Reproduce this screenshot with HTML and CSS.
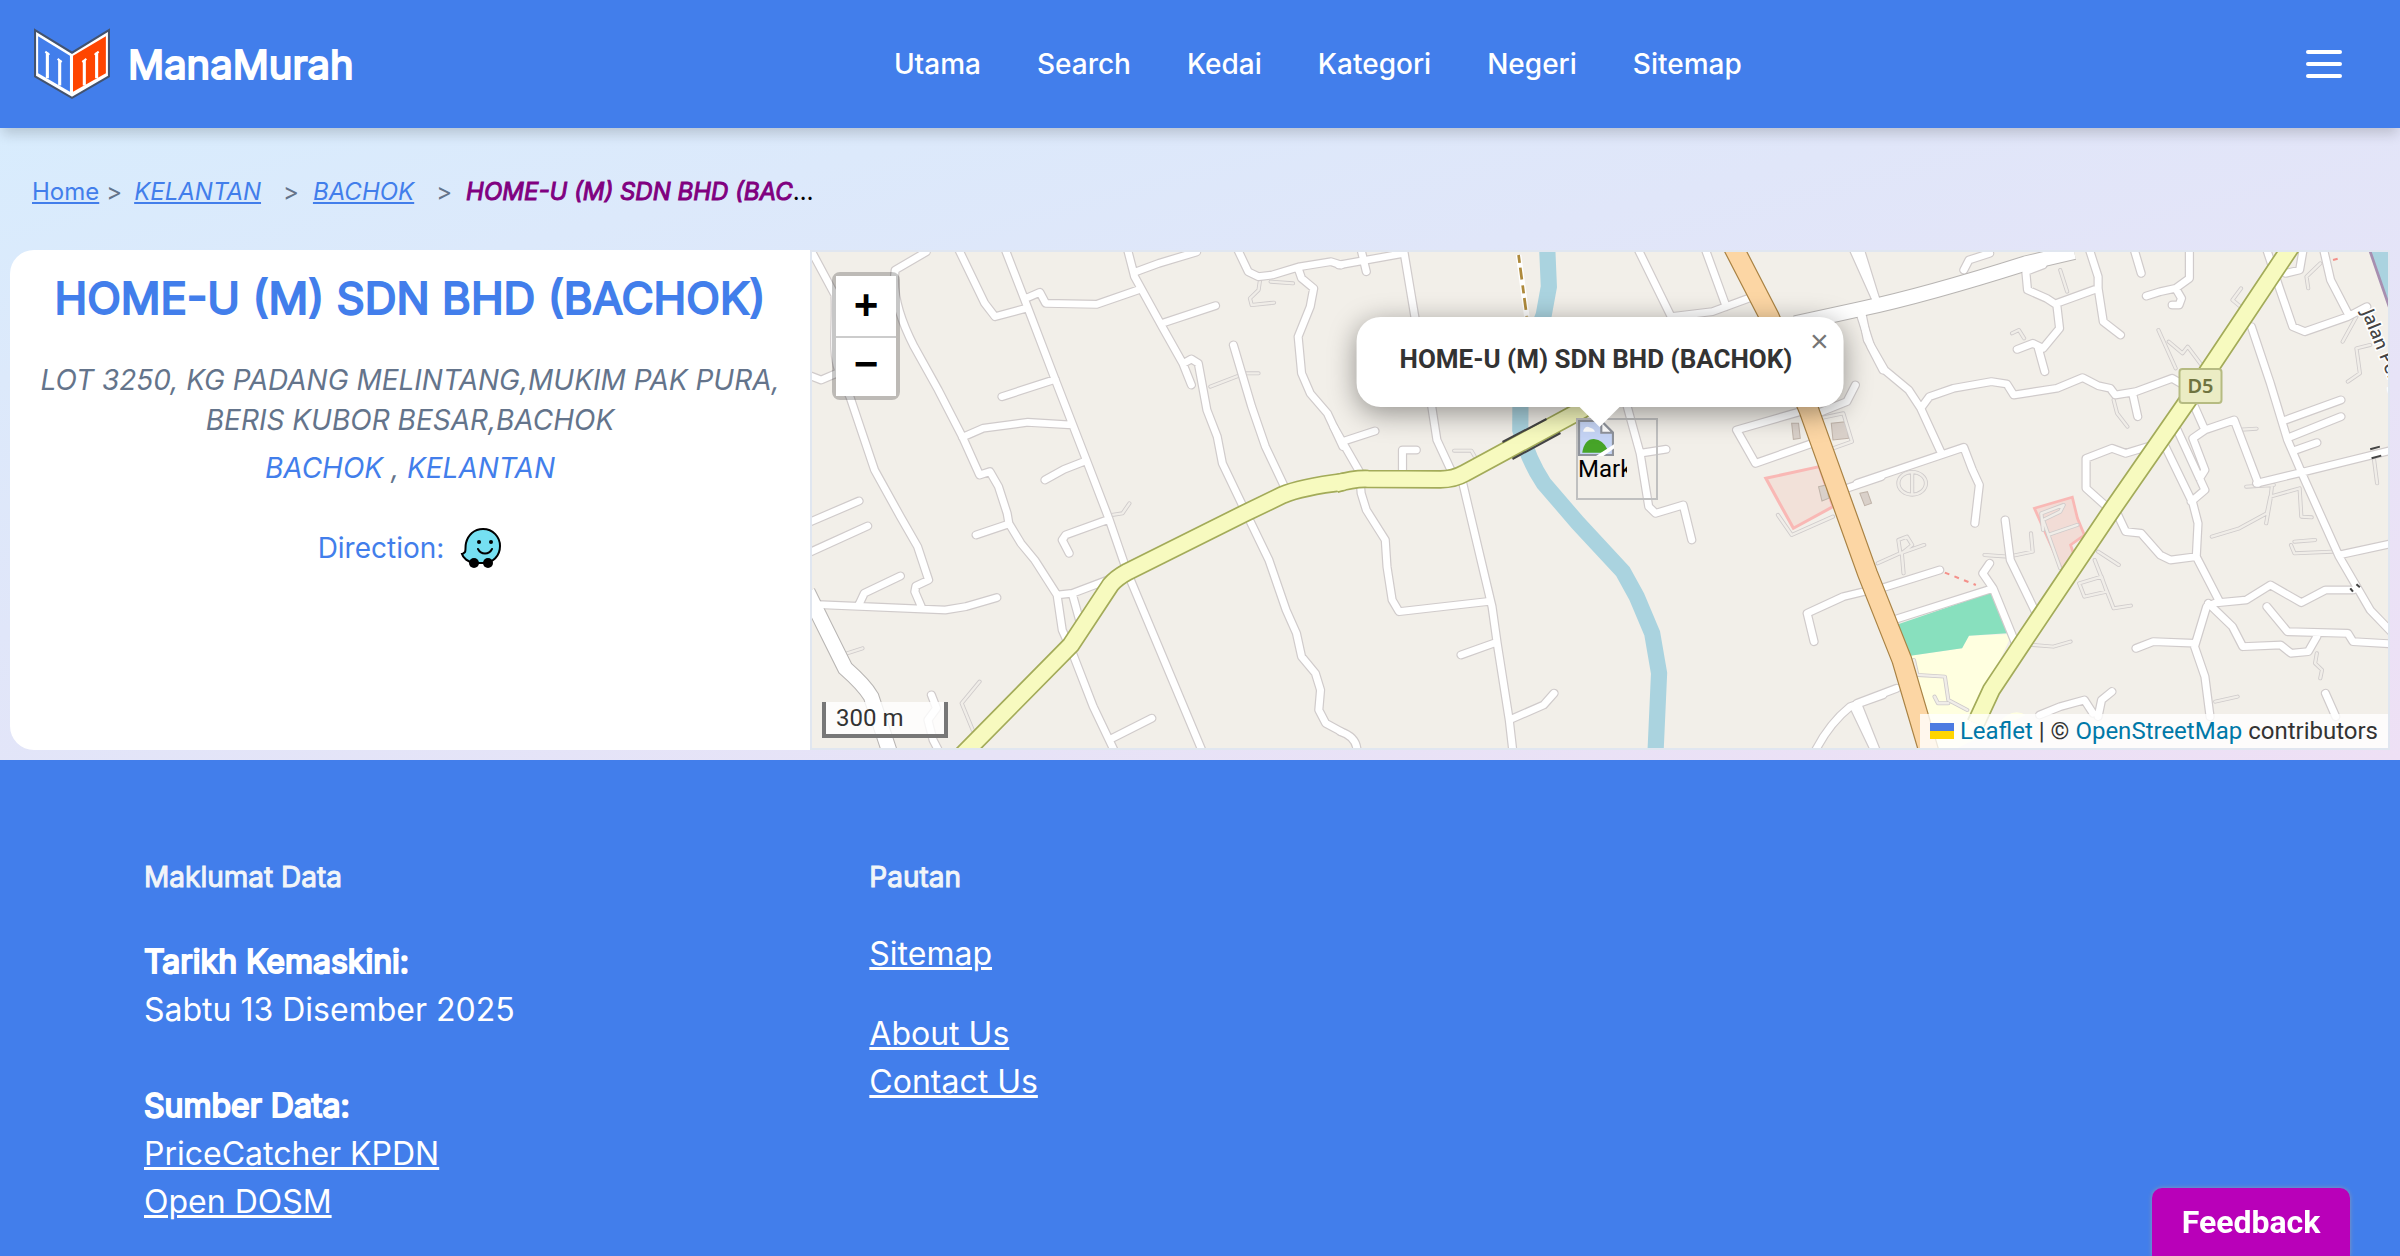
FILE: index.html
```html
<!DOCTYPE html>
<html lang="ms">
<head>
<meta charset="utf-8">
<meta name="viewport" content="width=device-width, initial-scale=1">
<title>HOME-U (M) SDN BHD (BACHOK) - ManaMurah</title>
<link rel="stylesheet" href="styles.css">
</head>
<body>
<header class="site-header">
  <a class="brand" href="#">
    <svg class="brand-logo" viewBox="0 0 76 70" aria-hidden="true">
      <path d="M2 2 38 24 74 2V47L38 68 2 47Z" fill="#fff" stroke="#43536f" stroke-width="2"/>
      <path d="M5 8 36 27V62L5 44Z" fill="#427eeb"/>
      <path d="M39 27 71 8V44L39 62Z" fill="#ff4500"/>
      <path d="M14 49V24M26 56V31M50 56V31M62 49V24" fill="none" stroke="#fff" stroke-width="3"/>
      <path d="M12 23 16 26M24 30 28 33M52 30 48 33M64 23 60 26" fill="none" stroke="#fff" stroke-width="2"/>
    </svg>
    <span class="brand-name">ManaMurah</span>
  </a>
  <nav class="main-nav" aria-label="Utama">
    <a href="#">Utama</a><a href="#">Search</a><a href="#">Kedai</a><a href="#">Kategori</a><a href="#">Negeri</a><a href="#">Sitemap</a>
  </nav>
  <button class="menu-button" type="button" aria-label="Menu"><span></span><span></span><span></span></button>
</header>

<main>
  <nav class="breadcrumb" aria-label="Breadcrumb">
    <a href="#">Home</a><span class="sep">&gt;</span>
    <a class="slanted" href="#">KELANTAN</a><span class="sep wide">&gt;</span>
    <a class="slanted" href="#">BACHOK</a><span class="sep wide">&gt;</span>
    <span class="current"><em>HOME-U (M) SDN BHD (BACHOK)</em></span>
  </nav>

  <section class="shop">
    <div class="shop-info">
      <h1>HOME-U (M) SDN BHD (BACHOK)</h1>
      <address>LOT 3250, KG PADANG MELINTANG,MUKIM PAK PURA, BERIS KUBOR BESAR,BACHOK</address>
      <p class="region"><a href="#">BACHOK</a> , <a href="#">KELANTAN</a></p>
      <a class="direction" href="#">Direction:
        <svg class="waze" viewBox="0 0 42 42" aria-hidden="true">
          <path d="M5 25C6 23 5 20 6 16 8 8 14 2 23 2 33 2 40 10 40 19 40 29 33 36 23 36H14C8 35 3 31 2 27 3 27 4 26 5 25Z" fill="#75e0f2" stroke="#000" stroke-width="2"/>
          <circle cx="14" cy="36" r="5"/><circle cx="28" cy="36" r="5"/>
          <circle cx="19" cy="15" r="2"/><circle cx="31" cy="15" r="2"/>
          <path d="M18 22C21 28 29 28 32 22" fill="none" stroke="#000" stroke-width="2" stroke-linecap="round"/>
        </svg>
      </a>
    </div>

    <div class="map">
      <svg class="map-tiles" viewBox="811 252 1577 496" preserveAspectRatio="xMidYMid slice" aria-hidden="true">
        <defs>
          <g id="streets" fill="none" stroke-linecap="round" stroke-linejoin="round">
            <path transform="translate(800 240) scale(.3444 .3333)" d="M35 40 100 165C105 250 90 330 110 390L145 475 215 690 290 830 340 920 372 1020 335 1038 332 1055 350 1098M365 36 275 90C265 160 290 240 330 320L400 450 470 590 520 705 550 695 575 740 600 820 605 850 640 910 680 960 745 1065 760 1170 790 1240 850 1400 910 1530M460 30 535 190 565 230 655 205M595 30 655 190 740 420 830 660 895 835 950 1000 1165 1530M655 175 695 157 712 190 860 193 980 150M950 30 970 110 1050 260 1110 370 1135 435M975 95 1040 70 1150 36M1050 250 1205 197M1112 370 1135 357 1155 370 1180 510 1210 590 1225 670 1285 800 1360 960 1410 1110 1440 1180 1455 1250 1495 1300 1510 1350 1505 1410 1525 1450 1570 1475M1257 315 1310 500 1350 620 1405 740M1270 30 1300 95 1330 110 1370 105 1450 80 1540 65 1570 75M1445 85 1455 115 1490 145 1480 200 1445 290 1455 400 1480 460 1530 520 1575 620M740 418 585 470M470 592 530 565 660 547 790 555M830 662 765 688 710 720M895 838 770 885 760 900 780 940M605 852 510 885M745 1065 790 1060 905 1015M790 1065 810 1140M25 847 170 783M25 938 195 858M30 1093 420 1110 480 1100 570 1073M170 1093 185 1060 290 1008M905 1495 1020 1435M30 408 60 420 105 400M380 1365 395 1405 370 1440 385 1500 400 1530"/>
            <path transform="translate(1340 240) scale(.3444 .3333)" d="M-5 75 185 40 215 225 265 500 280 600 325 700 355 730 440 1100 455 1210 490 1440 500 1530M60 30 75 95M-20 560 55 695 60 760 75 810 130 900 135 980 150 1080 170 1115 425 1085M5 605 100 573M180 700 180 630 220 630M350 1245 450 1208M490 1440 590 1395 620 1360M0 1475Q45 1490 48 1530M865 30 960 230 1080 215 1185 175M1060 30 1120 200M1490 30 1555 180M1510 225 1540 320 1575 390M830 490 870 640 895 800 915 820 995 795 1020 900M870 640 945 628M1335 515 1150 570 1205 670 1370 610M1385 520 1470 485 1495 435M1470 745 1570 710M1520 1055 1460 1070 1355 1120 1375 1205M1575 1365 1480 1400Q1420 1450 1380 1530M1490 1400 1550 1530"/>
            <path transform="translate(1860 240) scale(.3444 .3333)" d="M0 30 45 180M5 225 20 300 70 390 140 450 175 505 235 640M175 505 200 470 270 445 380 425 425 432 445 465 570 445 645 413 690 437 725 445 740 465 800 455 905 415 930 430M790 460 805 530M-10 730 300 622 325 690 345 735 332 850M520 60 530 75 480 95 485 150 540 175 570 195 578 265 530 325 500 310 455 328M515 320 535 395M570 190 690 145 690 110 665 30M690 145 705 245 755 285M795 30 815 100M955 30 955 115 915 145 870 155 830 168M915 145 932 175 925 195 905 195M300 90 315 60 375 40M1180 30 1215 140 1255 260 1290 275 1415 230 1470 200M1285 30 1275 90 1235 100M1345 30 1365 120 1415 220M1135 260 1190 430 1240 600 1290 720 1390 950 1480 1110 1545 1180M1235 540 1395 480M1250 590 1395 530M1265 630 1325 608M1150 730 1270 700 1545 630M970 500 1000 570 1085 540 1155 730M1000 570 965 595 1000 690 985 715M920 570 1000 750 960 785M885 620 965 790 980 850 975 950 1040 1080M745 820 770 875 815 880 870 945 900 960 975 950M850 615 770 640 730 625 655 655 655 745 720 805M1040 1088 1120 1080 1190 1035 1280 1088 1350 1050 1430 1050M1180 1100 1240 1175 1415 1180 1430 1205 1545 1212M1010 1090 1080 1160 1110 1220 1220 1215 1250 1240 1300 1235 1325 1190M1040 1085 1005 1100 970 1220 1000 1310 1015 1430M800 1225 850 1205 970 1210M1390 945 1545 910M420 840 435 960 510 1120M95 1140 385 1045 450 1210M385 1045 355 1000 375 970M60 1045 230 990M-10 1390 105 1345M-5 1400 45 1530M520 1425 580 1400 650 1380 675 1420M690 1430 700 1380 730 1355M1350 1360 1380 1430"/>
          </g>
          <g id="tracks" fill="none" stroke-linecap="round" stroke-linejoin="round">
            <path transform="translate(800 240) scale(.3444 .3333)" d="M1335 115 1330 150 1305 175 1310 195 1375 188M1365 125 1430 130M1190 440 1290 400 1330 400M905 825 935 820 955 790M135 1240 180 1225M500 1470 468 1390 520 1325"/>
            <path transform="translate(1340 240) scale(.3444 .3333)" d="M330 632 380 632 390 650M1270 825 1310 885 1430 830M1390 535 1460 520 1485 605 1430 625"/>
            <path transform="translate(1860 240) scale(.3444 .3333)" d="M440 280 460 270 475 295M580 90 600 155M1105 145 1080 180 1115 210M865 270 915 385M895 305 935 340 950 320 990 375M1335 70 1295 110 1300 145M1440 230 1400 305M1480 315 1440 325 1450 400 1415 425M735 480 745 520 775 560M1090 570 1150 566M1120 740 1200 735M1020 890 1100 865 1180 820 1190 770 1275 745 1280 830 1310 832M1195 735 1190 780 1178 850M1260 905 1320 900M1370 935 1260 940 1250 915M110 730A40 34 0 1 1 190 730A40 34 0 1 1 110 730M150 700V760M50 970 115 940 185 915M115 935 110 900 135 890 150 915 120 940 125 1000M360 945 430 950 500 935 495 880M690 935 750 975M680 960 735 1105 785 1097M635 1030 700 1010 715 1055 650 1070ZM500 1215 560 1220 610 1205M1325 1240 1320 1270 1340 1290 1335 1315M1490 650 1500 730M1030 1385 1095 1370M530 870 525 820 590 795 580 815 530 840 580 985M545 885 630 855M155 1260 165 1305 245 1310 255 1380 310 1410M215 1370 225 1390 255 1390"/>
          </g>
          <g id="secondary" fill="none">
            <path transform="translate(800 240) scale(.3444 .3333)" d="M470 1545 785 1215 900 1035Q915 1015 950 995L1290 820 1400 765Q1450 742 1580 725"/>
            <path transform="translate(1340 240) scale(.3444 .3333)" d="M-15 732Q40 715 80 717L290 718Q330 718 360 700L700 510 800 440"/>
            <path transform="translate(1860 240) scale(.3444 .3333)" d="M1250 20 985 430 730 810 470 1210 380 1350 335 1450"/>
          </g>
          <g id="wide-streets" fill="none">
            <path transform="translate(800 240) scale(.3444 .3333)" d="M20 1055 65 1150 130 1285Q185 1335 205 1370L260 1540"/>
            <path transform="translate(1340 240) scale(.3444 .3333)" d="M1320 250 1510 207Q1700 165 1990 70L2130 36"/>
          </g>
          <g id="primary" fill="none">
            <path transform="translate(1340 240) scale(.3444 .3333)" d="M1140 20 1245 230 1360 510 1530 1000 1630 1260 1710 1540"/>
          </g>
        </defs>
        <rect x="811" y="252" width="1577" height="496" fill="#f2efe9"/>
        <g transform="translate(1860 240) scale(.3444 .3333)">
          <path d="M1475 20 1545 230V20Z" fill="#aad3df" stroke="#a78fb0" stroke-width="8"/>
          <path d="M505 805 615 772 630 835 650 885 610 915 620 945 585 990Z" fill="#f2dcd6" stroke="#f9b8b5" stroke-width="8"/>
          <path d="M140 1248 295 1225 315 1187 440 1182 320 1450H400Q440 1400 480 1425L280 1525H200Z" fill="#ffffe0"/>
          <path d="M103 1155 385 1055 425 1180 315 1187 295 1225 140 1248Z" fill="#88e0be"/>
        </g>
        <g transform="translate(1340 240) scale(.3444 .3333)">
          <path d="M600 20 605 140 590 225 523 400 522 570Q545 660 590 730L690 850 820 995 860 1070 905 1180 925 1300 915 1530" fill="none" stroke="#aad3df" stroke-width="47"/>
          <path d="M1235 715 1390 680 1430 800 1315 865Z" fill="#f2e1d9" stroke="#f9b8b5" stroke-width="9"/>
          <path d="M517 45 541 230" fill="none" stroke="#fff" stroke-width="16"/>
          <path d="M517 45 541 230" fill="none" stroke="#ae8a3c" stroke-width="8" stroke-dasharray="24 14 36 18"/>
          <path d="M1310 550 1330 550 1335 595 1315 598ZM1425 550 1470 545 1475 595 1430 600ZM1388 740 1410 735 1418 775 1398 783ZM1508 760 1530 755 1542 790 1522 797Z" fill="#d9d0c9" stroke="#c0b4aa" stroke-width="3"/>
        </g>
        <use href="#tracks" stroke="#cfcbcb" stroke-width="12"/>
        <use href="#tracks" stroke="#f0ede8" stroke-width="7"/>
        <use href="#streets" stroke="#d0cbcb" stroke-width="27"/>
        <use href="#wide-streets" stroke="#b8b5b3" stroke-width="48"/>
        <use href="#streets" stroke="#fff" stroke-width="20"/>
        <use href="#wide-streets" stroke="#fff" stroke-width="42"/>
        <use href="#secondary" stroke="#a3ab59" stroke-width="56"/>
        <use href="#secondary" stroke="#f7fabf" stroke-width="46"/>
        <path d="M1502 442 1546 419M1512 459 1560 433" stroke="#444" stroke-width="2"/>
        <use href="#primary" stroke="#a98243" stroke-width="61"/>
        <use href="#primary" stroke="#fcd6a4" stroke-width="54"/>
        <g transform="translate(1860 240) scale(.3444 .3333)" fill="none">
          <path d="M245 998 335 1035M1372 60 1400 52" stroke="#f4908a" stroke-width="6" stroke-dasharray="14 16"/>
          <path d="M1480 628 1508 620M1484 655 1512 647M1422 1045 1430 1055M1440 1033 1450 1042" stroke="#444" stroke-width="6"/>
        </g>
        <rect x="2179" y="369" width="42" height="34" rx="3" fill="#ebecc4" stroke="#b6bb82" stroke-width="2"/>
        <text class="road-shield" x="2200" y="393" text-anchor="middle">D5</text>
        <text class="road-label" transform="translate(2361 312) rotate(68)">Jalan Pengkalan</text>
      </svg>

      <div class="zoom-control">
        <button type="button" aria-label="Zoom in">+</button>
        <button type="button" aria-label="Zoom out">−</button>
      </div>

      <div class="marker">
        <svg class="broken-image" viewBox="0 0 34 34" aria-hidden="true">
          <path d="M1 1H22L33 12V33H1Z" fill="#c6d5f6" stroke="#8f939b" stroke-width="2"/>
          <path d="M5 10Q7 5 11 7 15 8 16 11H5Z" fill="#fff"/>
          <path d="M4 31Q6 18 15 18 24 19 28 28L22 31Z" fill="#46a428"/>
          <path d="M17 34 34 23V27L24 34Z" fill="#fff"/>
          <path d="M22 1V12H33Z" fill="#fff" stroke="#8f939b" stroke-width="2"/>
        </svg>
        <span class="marker-alt">Marker</span>
      </div>

      <div class="popup">
        <strong>HOME-U (M) SDN BHD (BACHOK)</strong>
        <button class="popup-close" type="button" aria-label="Close popup">×</button>
      </div>

      <div class="map-scale">300 m</div>
      <div class="attribution">
        <a href="#"><svg class="flag" viewBox="0 0 24 16" aria-hidden="true"><path fill="#4c7be1" d="M0 0H24V8H0Z"/><path fill="#ffd500" d="M0 8H24V16H0Z"/></svg> Leaflet</a> | © <a href="#">OpenStreetMap</a> contributors
      </div>
    </div>
  </section>
</main>

<footer class="site-footer">
  <section>
    <h2>Maklumat Data</h2>
    <p class="first"><strong>Tarikh Kemaskini:</strong><br>Sabtu 13 Disember 2025</p>
    <p><strong>Sumber Data:</strong><br><a href="#">PriceCatcher KPDN</a><br><a href="#">Open DOSM</a></p>
  </section>
  <section>
    <h2>Pautan</h2>
    <ul>
      <li class="lead"><a href="#">Sitemap</a></li>
      <li><a href="#">About Us</a></li>
      <li><a href="#">Contact Us</a></li>
    </ul>
  </section>
</footer>
<button class="feedback" type="button">Feedback</button>
</body>
</html>
```
FILE: styles.css
```css
:root {
  --blue: #427eeb;
  --slate: #64748b;
}

* { box-sizing: border-box; }

body {
  margin: 0;
  min-height: 100vh;
  display: flex;
  flex-direction: column;
  font-family: Inter, "Liberation Sans", sans-serif;
  font-size: 28px;
  color: #000;
}

a { color: inherit; }
button { font: inherit; cursor: pointer; }

/* Header */
.site-header {
  position: relative;
  display: flex;
  align-items: center;
  justify-content: space-between;
  height: 128px;
  padding: 0 34px 0 33px;
  background: var(--blue);
  color: #fff;
  box-shadow: 0 8px 12px -2px rgba(0, 0, 0, .16);
}

.brand {
  display: flex;
  align-items: center;
  gap: 17px;
  text-decoration: none;
}

.brand-logo { width: 78px; height: 72px; }

.brand-name {
  font-size: 40px;
  -webkit-text-stroke: 2px currentColor;
}

.main-nav { display: flex; gap: 56px; }
.main-nav a { font-weight: 500; text-decoration: none; }

.menu-button {
  display: flex;
  flex-direction: column;
  gap: 8px;
  padding: 24px;
  border: 0;
  background: none;
}

.menu-button span {
  width: 36px;
  height: 4px;
  border-radius: 2px;
  background: #fff;
}

/* Page body */
main {
  padding: 0 10px 10px;
  background: linear-gradient(to bottom right, #d8ecfd, #e0e6f9 40%, #eee0f5);
}

.breadcrumb {
  display: flex;
  align-items: center;
  height: 122px;
  padding: 4px 22px 0;
  font-size: 24px;
  color: var(--blue);
}

.breadcrumb .slanted { font-style: italic; }
.sep { margin: 0 12px 0 7px; color: var(--slate); }
.sep.wide { margin: 0 14px 0 22px; }

.current {
  max-width: 358px;
  overflow: hidden;
  white-space: nowrap;
  text-overflow: ellipsis;
  color: #000;
}

.current em {
  color: #800080;
  -webkit-text-stroke: 1px currentColor;
}

.shop {
  display: grid;
  grid-template-columns: 800px 1fr;
  height: 500px;
  border-radius: 24px;
}

.shop-info {
  padding: 16px 24px;
  border-radius: 24px 0 0 24px;
  background: #fff;
  color: var(--slate);
  text-align: center;
}

h1 {
  margin: 0;
  font-size: 44px;
  line-height: 64px;
  font-weight: 400;
  color: var(--blue);
  -webkit-text-stroke: 2px currentColor;
}

address {
  margin-top: 30px;
  line-height: 40px;
}

.region {
  margin: 8px 0 0;
  line-height: 40px;
  font-style: italic;
}

.region a, .direction {
  color: var(--blue);
  text-decoration: none;
}

.direction {
  display: inline-flex;
  align-items: center;
  gap: 16px;
  margin-top: 39px;
}

.waze { width: 42px; height: 42px; }

/* Map */
.map {
  position: relative;
  overflow: hidden;
  border: 2px solid #e0e6f0;
  font-family: Roboto, "Liberation Sans", sans-serif;
  font-size: 24px;
  color: #333;
}

.map-tiles { display: block; width: 100%; height: 100%; }

.road-shield {
  font: 600 20px "Noto Sans", sans-serif;
  fill: #6f7440;
}

.road-label {
  font: 500 18px "Noto Sans", sans-serif;
  fill: #444;
  stroke: #fff;
  stroke-width: 3px;
  paint-order: stroke;
}

.zoom-control {
  position: absolute;
  top: 20px;
  left: 20px;
  border: 4px solid rgba(0, 0, 0, .22);
  border-radius: 8px;
  background-clip: padding-box;
}

.zoom-control button {
  display: block;
  width: 60px;
  height: 60px;
  padding: 0;
  border: 0;
  background: #fff;
  color: #000;
  font: bold 42px/64px "Liberation Mono", monospace;
}

.zoom-control button + button { border-top: 2px solid #ccc; line-height: 58px; }

.marker {
  position: absolute;
  top: calc(50% - 82px);
  left: calc(50% - 24px);
  width: 82px;
  height: 82px;
  overflow: hidden;
  border: 2px solid silver;
  color: #000;
}

.broken-image { display: block; width: 36px; height: 36px; }

.marker-alt {
  display: block;
  width: 49px;
  overflow: hidden;
  line-height: 26px;
}

.popup {
  position: absolute;
  left: 50%;
  bottom: calc(50% + 93px);
  transform: translateX(-50%);
  padding: 26px 51px 32px 43px;
  border-radius: 24px;
  background: #fff;
  font-size: 26px;
  line-height: 32px;
  white-space: nowrap;
  box-shadow: 0 6px 28px rgba(0, 0, 0, .4);
}

.popup::after {
  content: "";
  position: absolute;
  top: 100%;
  left: calc(50% - 20px);
  border: 20px solid transparent;
  border-top-color: #fff;
  border-bottom: 0;
}

.popup-close {
  position: absolute;
  top: 0;
  right: 0;
  width: 48px;
  height: 48px;
  padding: 0;
  border: 0;
  background: none;
  color: #757575;
  font: 32px/48px "Liberation Sans", sans-serif;
}

.map-scale {
  position: absolute;
  left: 10px;
  bottom: 10px;
  width: 126px;
  height: 36px;
  padding: 0 10px;
  border: 4px solid #777;
  border-top: 0;
  background: rgba(255, 255, 255, .8);
  line-height: 32px;
}

.attribution {
  position: absolute;
  right: 0;
  bottom: 0;
  padding: 0 10px;
  background: rgba(255, 255, 255, .8);
  line-height: 34px;
}

.attribution a { color: #0078a8; text-decoration: none; }
.flag { width: 24px; height: 16px; }

/* Footer */
.site-footer {
  flex: 1;
  display: grid;
  grid-template-columns: repeat(3, 1fr);
  gap: 64px;
  padding: 97px 144px 24px;
  background: var(--blue);
  color: #fff;
  font-size: 32px;
  line-height: 48px;
}

.site-footer h2 {
  margin: 0;
  font-size: 28px;
  line-height: 40px;
  font-weight: 400;
  color: #f1f5f9;
  -webkit-text-stroke: 1px currentColor;
}

.site-footer p { margin: 48px 0 0; }
.site-footer p.first { margin-top: 41px; }

.site-footer strong {
  font-weight: 400;
  -webkit-text-stroke: 2px currentColor;
}

.site-footer ul {
  margin: 33px 0 0;
  padding: 0;
  list-style: none;
}

.site-footer .lead { margin-bottom: 32px; }

.feedback {
  position: fixed;
  right: 50px;
  bottom: 0;
  width: 198px;
  height: 68px;
  padding: 0;
  border: 0;
  border-radius: 10px 10px 0 0;
  background: #b900b9;
  color: #fff;
  font: bold 32px Roboto, sans-serif;
  box-shadow: 0 0 4px rgba(160, 160, 160, .8);
}
```
